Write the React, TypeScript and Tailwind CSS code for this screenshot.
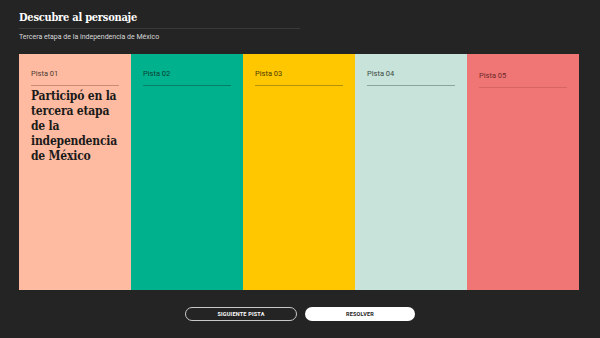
const pistas = [
  { label: 'Pista 01', bg: 'bg-[#ffbba1]', line: 'border-[#c98d77]', text: 'text-[#4a3a33]' },
  { label: 'Pista 02', bg: 'bg-[#00b18e]', line: 'border-[#0a7d66]', text: 'text-[#0b3f33]' },
  { label: 'Pista 03', bg: 'bg-[#ffc700]', line: 'border-[#b8910a]', text: 'text-[#4a3b05]' },
  { label: 'Pista 04', bg: 'bg-[#c8e3d9]', line: 'border-[#8aa59b]', text: 'text-[#3a4a44]' },
  { label: 'Pista 05', bg: 'bg-[#f07575]', line: 'border-[#d86464]', text: 'text-[#6b2a2a]' },
]

export default function App() {
  return (
    <div className="w-[600px] h-[338px] bg-[#242424] flex flex-col font-['Roboto',sans-serif] overflow-hidden">
      <div className="px-[19px] pt-[11px]">
        <h1 className="text-white text-[11px] font-bold font-['DejaVu_Serif_Condensed','DejaVu_Serif',serif] font-stretch-condensed leading-[14px] tracking-[-0.25px]">
          Descubre al personaje
        </h1>
        <div className="w-[281px] border-b border-[#3a3a3a] mt-[3px]" />
        <p className="text-[#d8d8d8] text-[7px] mt-[4px] leading-[8px]">
          Tercera etapa de la independencia de México
        </p>
      </div>

      <div className="ml-[19px] w-[560px] mt-[13px] h-[236px] grid grid-cols-5">
        {pistas.map((p, i) => (
          <div key={p.label} className={`${p.bg} px-[12px] ${i === 4 ? 'pt-[17px]' : 'pt-[15px]'}`}>
            <div className={`${p.text} text-[7.5px] leading-[10px]`}>{p.label}</div>
            <div className={`border-b ${p.line} mt-[6px]`} />
            {i === 0 && (
              <h2 className="mt-[3px] -mr-[4px] text-[#1a1a1a] text-[12px] font-bold font-['DejaVu_Serif_Condensed','DejaVu_Serif',serif] font-stretch-condensed leading-[15px] tracking-[-0.2px]">
                Participó en la tercera etapa de la independencia de México
              </h2>
            )}
          </div>
        ))}
      </div>

      <div className="flex justify-center gap-[8px] mt-[17px]">
        <button className="w-[112px] h-[14px] rounded-full border border-[#c8c8c8] text-white text-[5.5px] font-bold tracking-[0.2px] flex items-center justify-center">
          SIGUIENTE PISTA
        </button>
        <button className="w-[110px] h-[14px] rounded-full bg-white text-[#242424] text-[5.5px] font-bold tracking-[0.2px] flex items-center justify-center">
          RESOLVER
        </button>
      </div>
    </div>
  )
}
